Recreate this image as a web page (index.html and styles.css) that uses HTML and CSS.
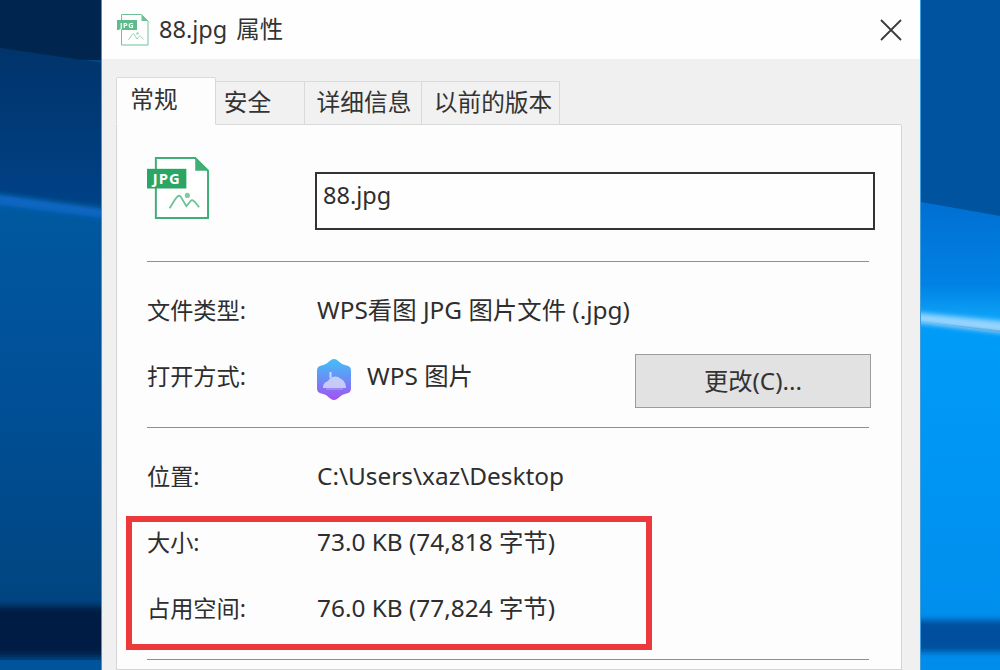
FILE: index.html
```html
<!DOCTYPE html>
<html lang="zh-CN">
<head>
<meta charset="utf-8">
<title>88.jpg 属性</title>
<link rel="stylesheet" href="styles.css">
</head>
<body>
<svg width="0" height="0" class="defs">
  <defs>
    <symbol id="jpg-file" viewBox="0 0 64 64">
      <path d="M9 1H49L62 14V62H9Z" fill="#fff" stroke="#3fae77" stroke-width="2"/>
      <path d="M49 1L62 14H49Z" fill="#3fae77"/>
      <rect x="0" y="12" width="40" height="20" fill="#2ba565"/>
      <text x="20" y="27.5" text-anchor="middle" class="jpg-label">JPG</text>
      <path d="M23 52L28 44C30 41 32 38 34 40L40 50L44 45C46 43 47 44 49 46L53 51" fill="none" stroke="#6cc196" stroke-width="1.8"/>
      <circle cx="41" cy="39" r="2.6" fill="#7fcba5"/>
    </symbol>
    <linearGradient id="wps-grad" x1="0" y1="0" x2="0" y2="1">
      <stop offset="0" stop-color="#42c0f6"/>
      <stop offset=".5" stop-color="#6a8df6"/>
      <stop offset="1" stop-color="#a84ff2"/>
    </linearGradient>
    <linearGradient id="left-mid" x1="0" y1="0" x2="0" y2="1">
      <stop offset="0" stop-color="#00346b"/>
      <stop offset="1" stop-color="#004186"/>
    </linearGradient>
    <linearGradient id="left-low" x1="0" y1="0" x2="0" y2="1">
      <stop offset="0" stop-color="#00599f"/>
      <stop offset=".5" stop-color="#004f97"/>
      <stop offset="1" stop-color="#00457f"/>
    </linearGradient>
    <linearGradient id="right-mid" x1="0" y1="0" x2="0" y2="1">
      <stop offset="0" stop-color="#006fd2"/>
      <stop offset=".65" stop-color="#0082e4"/>
      <stop offset="1" stop-color="#12aeff"/>
    </linearGradient>
    <linearGradient id="right-low" x1="0" y1="0" x2="0" y2="1">
      <stop offset="0" stop-color="#009cf8"/>
      <stop offset="1" stop-color="#008ceb"/>
    </linearGradient>
    <filter id="soft" x="-10%" y="-20%" width="120%" height="140%"><feGaussianBlur stdDeviation="3"/></filter>
    <filter id="softer" x="-10%" y="-40%" width="120%" height="180%"><feGaussianBlur stdDeviation="2.4"/></filter>
  </defs>
</svg>

<main class="desktop">
  <svg class="wallpaper" viewBox="0 0 1000 670" width="1000" height="670" aria-hidden="true">
    <rect width="1000" height="670" fill="#00457f"/>
    <rect x="0" y="0" width="110" height="60" fill="#00264f"/>
    <path d="M0 48L110 64V205L0 192Z" fill="url(#left-mid)"/>
    <path d="M0 196L110 212V610H0Z" fill="url(#left-low)"/>
    <path d="M-10 193L110 209L110 219L-10 204Z" fill="#0866c2" filter="url(#softer)"/>
    <rect x="-10" y="606" width="120" height="50" fill="#001f45" filter="url(#soft)"/>
    <rect x="0" y="660" width="110" height="10" fill="#00549c"/>
    <rect x="910" y="0" width="90" height="220" fill="#00539f"/>
    <path d="M910 200L1000 216V330L910 320Z" fill="url(#right-mid)"/>
    <path d="M910 320L1000 332V670H910Z" fill="url(#right-low)"/>
    <path d="M910 312L1010 322L1010 334L910 322Z" fill="#96d4ff" filter="url(#softer)"/>
    <rect x="910" y="620" width="100" height="32" fill="#00509e" filter="url(#soft)"/>
  </svg>

  <section class="window">
    <header class="titlebar">
      <svg class="title-icon" aria-hidden="true"><use href="#jpg-file"/></svg>
      <h1 class="title">88.jpg 属性</h1>
      <svg class="close" viewBox="0 0 22 22" aria-hidden="true"><path d="M1 1L21 21M21 1L1 21"/></svg>
    </header>

    <div class="body">
      <nav class="tabs">
        <div class="tab tab-active">常规</div>
        <div class="tab tab-security">安全</div>
        <div class="tab tab-details">详细信息</div>
        <div class="tab tab-prev">以前的版本</div>
      </nav>

      <div class="panel">
        <div class="file-head">
          <svg class="file-icon" aria-hidden="true"><use href="#jpg-file"/></svg>
          <div class="name-box">88.jpg</div>
        </div>
        <hr class="rule">
        <div class="group">
          <div class="row">
            <div class="label">文件类型:</div>
            <div class="value">WPS看图 JPG 图片文件 (.jpg)</div>
          </div>
          <div class="row">
            <div class="label">打开方式:</div>
            <div class="value app">
              <svg class="wps-icon" viewBox="0 0 36 41" aria-hidden="true">
                <path d="M18 0C22 0 24 5 29 6C33 7 35 8 35 12V29C35 33 33 34 29 35C24 36 22 41 18 41C14 41 12 36 7 35C3 34 1 33 1 29V12C1 8 3 7 7 6C12 5 14 0 18 0Z" fill="url(#wps-grad)"/>
                <path d="M7 29C7 25 9 23 12 22C15 17 21 16 25 20C28 21 30 25 30 29Z" fill="#e4e6fb" fill-opacity=".72"/>
                <rect x="13.5" y="13" width="2" height="6" fill="#fff" fill-opacity=".65"/>
                <path d="M8 26H29M10 30H27" stroke="#c7cdf8" stroke-opacity=".6" stroke-width="1.2"/>
              </svg>
              <span>WPS 图片</span>
            </div>
            <button class="change" type="button">更改(C)...</button>
          </div>
        </div>
        <hr class="rule">
        <div class="group group-size">
          <div class="row">
            <div class="label">位置:</div>
            <div class="value">C:\Users\xaz\Desktop</div>
          </div>
          <div class="row">
            <div class="label">大小:</div>
            <div class="value">73.0 KB (74,818 字节)</div>
          </div>
          <div class="row">
            <div class="label">占用空间:</div>
            <div class="value">76.0 KB (77,824 字节)</div>
          </div>
          <div class="highlight"></div>
        </div>
        <hr class="rule">
      </div>
    </div>
  </section>
</main>
</body>
</html>
```

FILE: styles.css
```css
* { box-sizing: border-box; }

html, body {
  margin: 0;
  padding: 0;
  width: 1000px;
  height: 670px;
  overflow: hidden;
}

body {
  font-family: "Noto Sans", "Noto Sans CJK SC", sans-serif;
  color: #2e2e2e;
  background: #00457f;
}

.defs { position: absolute; }

.jpg-label {
  font-family: "Open Sans", "Noto Sans", sans-serif;
  font-size: 15px;
  font-weight: 700;
  letter-spacing: 1px;
  fill: #fff;
}

.desktop {
  position: relative;
  width: 1000px;
  height: 670px;
  overflow: hidden;
}

.wallpaper {
  position: absolute;
  left: 0;
  top: 0;
  display: block;
}

.window {
  position: absolute;
  left: 101px;
  top: 0;
  width: 820px;
  height: 670px;
  display: flex;
  flex-direction: column;
  border-left: 1px solid #3f97d2;
  border-right: 1px solid #3f9fdc;
  background: #f0f0f0;
}

.titlebar {
  height: 59px;
  flex: none;
  display: flex;
  align-items: center;
  padding: 0 18px 0 15px;
  background: #fefefe;
}

.title-icon {
  width: 32px;
  height: 32px;
  opacity: .75;
  margin-right: 10px;
}

.title {
  flex: 1;
  margin: 0;
  font-size: 23.5px;
  line-height: 1;
  font-weight: 400;
  word-spacing: 3px;
  color: #333;
}

.close {
  width: 22px;
  height: 22px;
  fill: none;
  stroke: #3a3a3a;
  stroke-width: 1.8;
}

.body {
  flex: 1;
  display: flex;
  flex-direction: column;
  padding: 18px 18px 0 14px;
  min-height: 0;
}

.tabs {
  display: flex;
  align-items: flex-end;
  flex: none;
  position: relative;
  z-index: 1;
  margin-bottom: -1px;
}

.tab {
  height: 44px;
  display: flex;
  align-items: center;
  justify-content: center;
  font-size: 23.7px;
  line-height: 1;
  color: #333;
  background: #f1f1f1;
  border: 1px solid #d9d9d9;
  border-left: 0;
}

.tab-active {
  height: 48px;
  width: 100px;
  background: #fdfdfd;
  border-left: 1px solid #d9d9d9;
  border-bottom-color: #fdfdfd;
  border-radius: 2px 2px 0 0;
  padding: 0 24px 3px 0;
}

.tab-security { width: 89px; padding-right: 25px; }
.tab-details { width: 117px; padding-left: 2px; }
.tab-prev { width: 138px; padding-left: 5px; }

.panel {
  flex: 1;
  min-height: 0;
  padding: 0 32px 0 30px;
  background: #fdfdfe;
  border: 1px solid #d4d4d4;
  border-radius: 2px 2px 0 0;
}

.file-head {
  display: flex;
  align-items: flex-start;
  padding: 32px 0 31px;
}

.file-icon {
  width: 63px;
  height: 63px;
  flex: none;
  margin-right: 105px;
}

.name-box {
  flex: 1;
  height: 58px;
  margin: 15px -6px 0 0;
  padding: 5px 6px 0;
  border: 2px solid #333;
  font-size: 23.5px;
  line-height: 32px;
  background: #fefefe;
}

.rule {
  margin: 0;
  border: 0;
  height: 1px;
  background: #8f8f8f;
}

.group {
  position: relative;
  padding: 16px 0 17px;
}

.row {
  display: flex;
  align-items: center;
  height: 66px;
}

.label {
  width: 170px;
  flex: none;
  font-size: 23.2px;
  line-height: 1;
}

.value {
  flex: 1;
  font-size: 24.4px;
  line-height: 1;
  white-space: nowrap;
  padding-bottom: 2px;
}

.app {
  display: flex;
  align-items: center;
  padding-bottom: 0;
}

.wps-icon {
  width: 36px;
  height: 41px;
  margin: 4px 15px 0 -1px;
}

.app span {
  position: relative;
  top: -1px;
}

.change {
  width: 236px;
  height: 54px;
  margin: 8px -2px 0 0;
  align-self: center;
  background: #e2e2e2;
  border: 1px solid #9c9c9c;
  border-radius: 0;
  font: inherit;
  font-size: 24.3px;
  line-height: 1;
  color: #333;
  padding: 0;
}

.highlight {
  position: absolute;
  left: -21px;
  top: 88px;
  width: 526px;
  height: 134px;
  border: 6px solid #ec3a3c;
  pointer-events: none;
}
```
